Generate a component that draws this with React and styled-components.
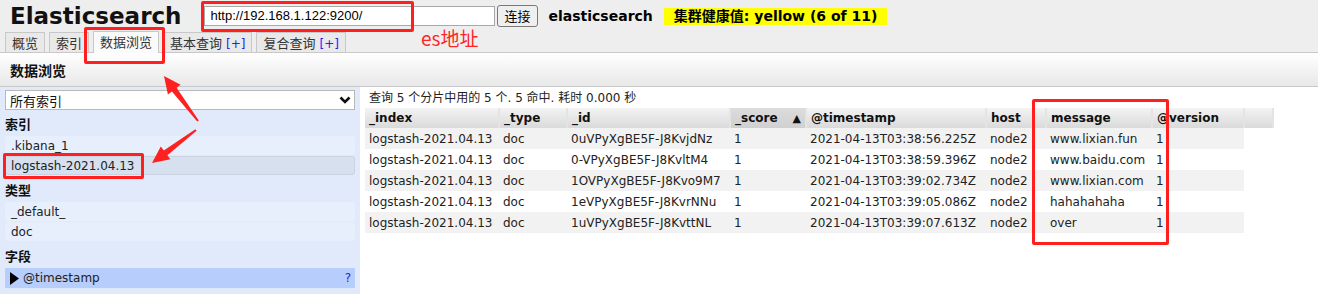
import React from "react";
import styled, { createGlobalStyle } from "styled-components";

const GlobalStyle = createGlobalStyle`
  body {
    margin: 0;
    background: #fff;
    font-family: "DejaVu Sans", "Noto Sans CJK SC", sans-serif;
    font-size: 12px;
    color: #222;
  }
`;

const Page = styled.div`
  position: relative;
  width: 1318px;
  height: 294px;
  overflow: hidden;
`;

const Header = styled.header`
  background: #eeeeee;
  border-bottom: 1px solid #c8c8c8;
  height: 52px;
`;

const TopRow = styled.div`
  display: flex;
  align-items: center;
  height: 32px;
  padding-left: 10px;
`;

const Title = styled.h1`
  margin: 0 23px 0 0;
  font-size: 23px;
  font-weight: bold;
  color: #111;
`;

const UrlInput = styled.div`
  box-sizing: border-box;
  width: 291px;
  height: 20px;
  background: #fff;
  border: 1px solid #a9a9a9;
  font-family: "Liberation Sans", Arial, sans-serif;
  font-size: 13px;
  line-height: 18px;
  padding-left: 5px;
  color: #000;
`;

const Button = styled.div`
  box-sizing: border-box;
  margin-left: 2px;
  height: 22px;
  padding: 0 6px;
  border: 1px solid #7a7a7a;
  border-radius: 3px;
  background: #efefef;
  font-family: "Noto Sans CJK SC", sans-serif;
  font-size: 13px;
  line-height: 20px;
  color: #000;
`;

const ClusterName = styled.span`
  margin-left: 11px;
  font-size: 14px;
  font-weight: bold;
  color: #000;
`;

const Health = styled.span`
  margin-left: 11px;
  background: #ffff00;
  padding: 0 10px;
  height: 17px;
  line-height: 17px;
  font-size: 14px;
  font-weight: bold;
  color: #000;
`;

const Tabs = styled.div`
  display: flex;
  gap: 4px;
  padding-left: 5px;
  align-items: flex-end;
  height: 20px;
`;

const Tab = styled.div`
  box-sizing: border-box;
  height: ${(p) => (p.$active ? "22px" : "20px")};
  padding: 0 6px;
  border: 1px solid #c8c8c8;
  border-bottom: none;
  background: ${(p) => (p.$active ? "#fafafa" : "#e9e9e9")};
  margin-bottom: ${(p) => (p.$active ? "-1px" : "0")};
  font-family: "Noto Sans CJK SC", sans-serif;
  font-size: 13px;
  line-height: 20px;
  color: #333;
  white-space: nowrap;
`;

const Plus = styled.span`
  color: #2222ee;
  margin-left: 4px;
  font-family: "DejaVu Sans", sans-serif;
  font-size: 12px;
`;

const Toolbar = styled.div`
  height: 33px;
  background: linear-gradient(#ffffff, #e8e8e8);
  border-bottom: 1px solid #c9c9c9;
  display: flex;
  align-items: center;
  padding-left: 10px;
  font-family: "Noto Sans CJK SC", sans-serif;
  font-size: 14px;
  font-weight: bold;
  color: #111;
`;

const Body = styled.div`
  display: flex;
  height: 207px;
`;

const Sidebar = styled.aside`
  box-sizing: border-box;
  width: 360px;
  background: #e0eafb;
  padding: 3px 5px 0 5px;
  display: flex;
  flex-direction: column;
`;

const Select = styled.div`
  box-sizing: border-box;
  height: 20px;
  background: #fff;
  border: 1px solid #b9b9b9;
  display: flex;
  align-items: center;
  justify-content: space-between;
  padding: 0 3px 0 4px;
  font-family: "Noto Sans CJK SC", sans-serif;
  font-size: 13px;
  color: #111;
`;

const Label = styled.div`
  height: 26px;
  line-height: 28px;
  font-family: "Noto Sans CJK SC", sans-serif;
  font-size: 13px;
  font-weight: bold;
  color: #111;
`;

const Item = styled.div`
  box-sizing: border-box;
  height: 19px;
  margin-bottom: 1px;
  border-radius: 3px;
  padding-left: 5px;
  display: flex;
  align-items: center;
  font-size: 12px;
  color: #222;
  background: ${(p) => (p.$selected ? "#d6e0ee" : "#e8effc")};
  border: 1px solid ${(p) => (p.$selected ? "#c9d3e2" : "transparent")};
`;

const Field = styled.div`
  box-sizing: border-box;
  height: 21px;
  background: #b7cdfb;
  border-bottom: 1px solid #dfe8fb;
  display: flex;
  align-items: center;
  padding: 0 4px 0 5px;
  font-size: 12px;
  color: #222;
`;

const FieldName = styled.span`
  flex: 1;
  margin-left: 4px;
`;

const Help = styled.span`
  color: #2424e0;
  font-size: 12px;
`;

const Main = styled.main`
  flex: 1;
  padding-left: 5px;
`;

const Info = styled.div`
  height: 21px;
  line-height: 23px;
  padding-left: 4px;
  font-size: 12px;
  color: #222;
`;

const Table = styled.table`
  border-collapse: collapse;
  table-layout: fixed;
  font-size: 12px;
`;

const Th = styled.th`
  box-sizing: border-box;
  height: 20px;
  padding: 0 4px;
  text-align: left;
  font-weight: bold;
  color: #111;
  background: ${(p) =>
    p.$sorted ? "linear-gradient(#dcdcdc, #d0d0d0)" : "linear-gradient(#f3f3f3, #dadada)"};
  border-right: 2px solid #e4e4e4;
  white-space: nowrap;
`;

const Arrow = styled.span`
  float: right;
  font-size: 11px;
  margin-top: 1px;
`;

const Tr = styled.tr`
  background: ${(p) => (p.$odd ? "#f2f2f2" : "#ffffff")};
`;

const Td = styled.td`
  height: 21px;
  padding: 0 4px;
  white-space: nowrap;
  color: #222;
`;

const Mark = styled.div`
  position: absolute;
  box-sizing: border-box;
  border: 3px solid #ff1f1f;
  border-radius: 2px;
  pointer-events: none;
`;

const Note = styled.div`
  position: absolute;
  left: 421px;
  top: 26px;
  color: #ff2525;
  font-family: "Noto Sans CJK SC", sans-serif;
  font-size: 19px;
  line-height: 24px;
`;

const Overlay = styled.svg`
  position: absolute;
  left: 0;
  top: 0;
  pointer-events: none;
`;

function arrowPoints(x1, y1, x2, y2) {
  const dx = x2 - x1;
  const dy = y2 - y1;
  const len = Math.hypot(dx, dy);
  const ux = dx / len;
  const uy = dy / len;
  const nx = -uy;
  const ny = ux;
  const head = 17;
  const bx = x2 - ux * head;
  const by = y2 - uy * head;
  const pts = [
    [x1 + nx * 1, y1 + ny * 1],
    [bx + nx * 3, by + ny * 3],
    [bx + nx * 8, by + ny * 8],
    [x2, y2],
    [bx - nx * 8, by - ny * 8],
    [bx - nx * 3, by - ny * 3],
    [x1 - nx * 1, y1 - ny * 1],
  ];
  return pts.map((p) => p.map((v) => v.toFixed(1)).join(",")).join(" ");
}

const columns = [
  { key: "_index", w: 134 },
  { key: "_type", w: 68 },
  { key: "_id", w: 163 },
  { key: "_score", w: 76, sorted: true },
  { key: "@timestamp", w: 180 },
  { key: "host", w: 60 },
  { key: "message", w: 106 },
  { key: "@version", w: 92 },
  { key: "", w: 29 },
];

const rows = [
  ["0uVPyXgBE5F-J8KvjdNz", "2021-04-13T03:38:56.225Z", "www.lixian.fun"],
  ["0-VPyXgBE5F-J8KvltM4", "2021-04-13T03:38:59.396Z", "www.baidu.com"],
  ["1OVPyXgBE5F-J8Kvo9M7", "2021-04-13T03:39:02.734Z", "www.lixian.com"],
  ["1eVPyXgBE5F-J8KvrNNu", "2021-04-13T03:39:05.086Z", "hahahahaha"],
  ["1uVPyXgBE5F-J8KvttNL", "2021-04-13T03:39:07.613Z", "over"],
];

export default function App() {
  return (
    <Page>
      <GlobalStyle />
      <Header>
        <TopRow>
          <Title>Elasticsearch</Title>
          <UrlInput>http://192.168.1.122:9200/</UrlInput>
          <Button>连接</Button>
          <ClusterName>elasticsearch</ClusterName>
          <Health>集群健康值: yellow (6 of 11)</Health>
        </TopRow>
        <Tabs>
          <Tab>概览</Tab>
          <Tab>索引</Tab>
          <Tab $active>数据浏览</Tab>
          <Tab>
            基本查询<Plus>[+]</Plus>
          </Tab>
          <Tab>
            复合查询<Plus>[+]</Plus>
          </Tab>
        </Tabs>
      </Header>
      <Toolbar>数据浏览</Toolbar>
      <Body>
        <Sidebar>
          <Select>
            <span>所有索引</span>
            <svg width="12" height="8" viewBox="0 0 12 8">
              <path d="M1.5 1.5 L6 6 L10.5 1.5" fill="none" stroke="#111" strokeWidth="2.6" />
            </svg>
          </Select>
          <Label>索引</Label>
          <Item>.kibana_1</Item>
          <Item $selected>logstash-2021.04.13</Item>
          <Label>类型</Label>
          <Item>_default_</Item>
          <Item>doc</Item>
          <Label>字段</Label>
          <Field>
            <svg width="9" height="13" viewBox="0 0 9 13">
              <path d="M0 0 L9 6.5 L0 13 Z" fill="#000" />
            </svg>
            <FieldName>@timestamp</FieldName>
            <Help>?</Help>
          </Field>
        </Sidebar>
        <Main>
          <Info>查询 5 个分片中用的 5 个. 5 命中. 耗时 0.000 秒</Info>
          <Table>
            <colgroup>
              {columns.map((c, i) => (
                <col key={i} style={{ width: c.w }} />
              ))}
            </colgroup>
            <thead>
              <tr>
                {columns.map((c, i) => (
                  <Th key={i} $sorted={c.sorted}>
                    {c.key}
                    {c.sorted && <Arrow>▲</Arrow>}
                  </Th>
                ))}
              </tr>
            </thead>
            <tbody>
              {rows.map((r, i) => (
                <Tr key={i} $odd={i % 2 === 0}>
                  <Td>logstash-2021.04.13</Td>
                  <Td>doc</Td>
                  <Td>{r[0]}</Td>
                  <Td>1</Td>
                  <Td>{r[1]}</Td>
                  <Td>node2</Td>
                  <Td>{r[2]}</Td>
                  <Td>1</Td>
                </Tr>
              ))}
            </tbody>
          </Table>
        </Main>
      </Body>

      <Mark style={{ left: 201, top: 1, width: 213, height: 31 }} />
      <Mark style={{ left: 84, top: 27, width: 81, height: 37 }} />
      <Mark style={{ left: 3, top: 153, width: 141, height: 26 }} />
      <Mark style={{ left: 1032, top: 99, width: 137, height: 146 }} />
      <Note>es地址</Note>
      <Overlay width="1318" height="294">
        <polygon points={arrowPoints(198, 121, 164, 76)} fill="#ff2020" />
        <polygon points={arrowPoints(196, 130, 152, 163)} fill="#ff2020" />
      </Overlay>
    </Page>
  );
}
